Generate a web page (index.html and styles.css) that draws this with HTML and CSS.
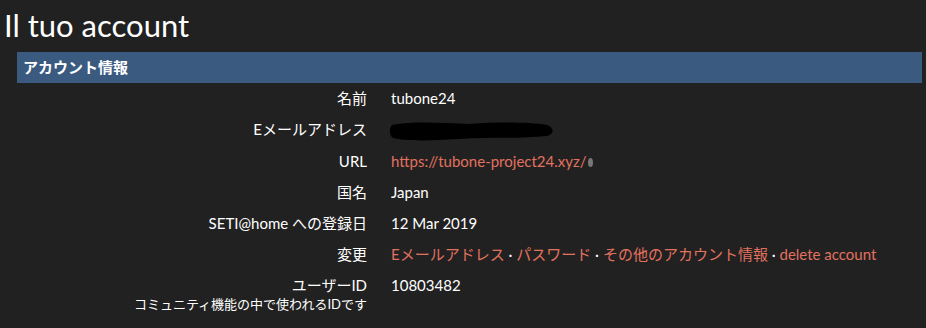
FILE: index.html
```html
<!DOCTYPE html>
<html lang="ja">
<head>
    <meta charset="UTF-8">
    <title>Il tuo account</title>
    <link rel="stylesheet" href="styles.css">
</head>
<body>
    <h1 class="title">Il tuo account</h1>
    <div class="panel">
        <div class="panel-head">アカウント情報</div>
        <div class="info">
            <div class="label">名前</div>
            <div class="value">tubone24</div>

            <div class="label">Eメールアドレス</div>
            <div class="value">
                <svg class="redact" width="166" height="22" viewBox="0 0 166 22">
                    <path d="M3 5 C25 1 55 3 80 4 C110 2 140 2 158 5 C165 7 166 14 158 16 C130 19 100 17 70 19 C40 21 15 21 4 18 C0 15 0 8 3 5 Z" fill="#000"/>
                </svg>
            </div>

            <div class="label">URL</div>
            <div class="value"><a href="#">https://tubone-project24.xyz/</a><span class="dot"></span></div>

            <div class="label">国名</div>
            <div class="value">Japan</div>

            <div class="label">SETI@home への登録日</div>
            <div class="value">12 Mar 2019</div>

            <div class="label">変更</div>
            <div class="value">
                <a href="#">Eメールアドレス</a> · <a href="#">パスワード</a> · <a href="#">その他のアカウント情報</a> · <a href="#">delete account</a>
            </div>

            <div class="label">ユーザーID<br><span class="note">コミュニティ機能の中で使われるIDです</span></div>
            <div class="value">10803482</div>
        </div>
    </div>
</body>
</html>
```

FILE: styles.css
```css
body {
    margin: 0;
    background-color: #212121;
    color: #fff;
    font-family: Lato, "Noto Sans CJK JP", sans-serif;
    font-size: 15px;
}

.title {
    margin: 0;
    padding: 6px 0 0 4px;
    font-size: 31px;
    font-weight: 400;
    line-height: 38px;
}

.panel {
    margin: 8px 4px 0 17px;
}

.panel-head {
    background-color: #3b5a7f;
    font-weight: bold;
    padding: 0 6px;
    height: 31px;
    line-height: 31px;
}

.info {
    display: grid;
    grid-template-columns: 350px 1fr;
    column-gap: 24px;
    row-gap: 8px;
    padding-top: 4px;
    line-height: 23px;
}

.label {
    text-align: right;
}

.note {
    display: block;
    font-size: 13px;
    line-height: 14px;
}

a {
    color: #e2715f;
    text-decoration: none;
}

.redact {
    vertical-align: middle;
    margin-left: -2px;
}

.dot {
    display: inline-block;
    width: 5px;
    height: 9px;
    border-radius: 50%;
    background-color: #777;
    margin-left: 1px;
}
```
